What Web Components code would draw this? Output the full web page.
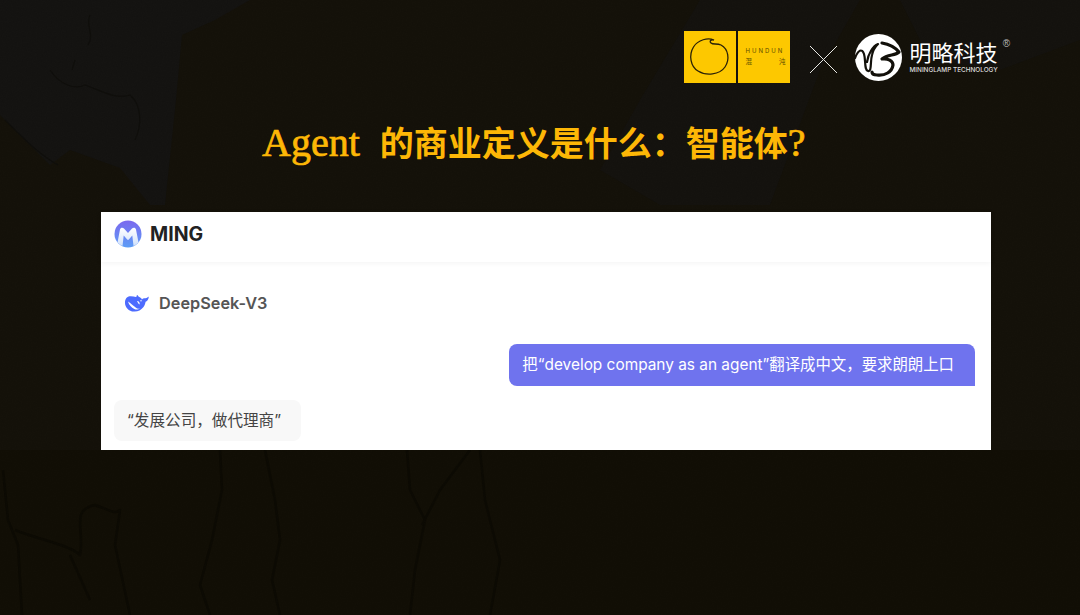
<!DOCTYPE html>
<html lang="zh">
<head>
<meta charset="utf-8">
<title>Agent 的商业定义是什么</title>
<style>
    html, body { margin: 0; height: 100%; background: #12100a; overflow: hidden; }
</style>
</head>
<body>
<slide-page>
    <brand-bar slot="top"></brand-bar>
    <slide-title slot="top"><span>Agent&nbsp; </span>的商业定义是什么&#xFF1A;智能体<span>?</span></slide-title>
    <chat-card>
        <model-label>DeepSeek-V3</model-label>
        <chat-bubble role="user">把“develop company as an agent”翻译成中文&#xFF0C;要求朗朗上口</chat-bubble>
        <chat-bubble role="reply">“发展公司&#xFF0C;做代理商”</chat-bubble>
    </chat-card>
</slide-page>

<script>
const SANS = `Inter, "Noto Sans CJK SC", sans-serif`;

class SlidePage extends HTMLElement {
    constructor() {
        super();
        this.attachShadow({mode: 'open'});
        this.shadowRoot.innerHTML = `
<style>
    :host{
        display: block;
        position: relative;
        width: 1080px;
        height: 615px;
        overflow: hidden;
        background: #12100a;
    }
    .backdrop{
        position: absolute;
        top: 0;
        left: 0;
    }
    .content{
        position: relative;
        display: flex;
        flex-direction: column;
        height: 100%;
        box-sizing: border-box;
        padding: 31px 70px 0 101px;
    }
    .card{
        display: block;
        margin-top: 46px;
    }
</style>
<svg class="backdrop" width="1080" height="615" viewBox="0 0 1080 615">
    <defs>
        <filter id="grain" x="0" y="0" width="100%" height="100%">
            <feTurbulence type="fractalNoise" baseFrequency="0.8" numOctaves="2" seed="4"/>
            <feColorMatrix values="0 0 0 0 0  0 0 0 0 0  0 0 0 0 0  0.8 0 0 0 -0.3"/>
        </filter>
    </defs>
    <rect width="1080" height="615" fill="#15120a"/>
    <rect y="450" width="1080" height="165" fill="#120f06"/>
    <path d="M0 0H250L215 20L182 35L176 100L165 205H150L120 168L70 150L50 165L0 115Z" fill="#151412"/>
    <path d="M600 170L640 100L700 0H860L820 70L770 205H660Z" fill="#15130f"/>
    <path d="M900 0H1080V40L1000 70L930 60Z" fill="#15130f"/>
    <g fill="none" stroke="#100f0c" stroke-width="1.200">
        <path d="M50 70C60 85 75 90 85 85C100 90 115 100 130 95C142 105 142 125 135 140"/>
        <path d="M75 60L72 70M90 15C85 25 95 35 88 45"/>
        <path d="M5 120C25 140 40 155 58 165"/>
    </g>
    <g fill="none" stroke="#0d0b04" stroke-width="2.500" stroke-linejoin="round">
        <path d="M3 470L8 520L18 545L22 615"/>
        <path d="M15 530C40 540 70 545 80 555C85 530 70 510 95 505C110 510 115 515 120 510L115 545L130 615"/>
        <path d="M70 555L90 600"/>
        <path d="M220 450L222 490L212 540L200 585L210 615"/>
        <path d="M265 450L275 500L280 540L272 580L280 615"/>
        <path d="M407 450L410 490L425 520L415 570L410 615"/>
        <path d="M470 450L440 490L422 525"/>
        <path d="M480 450L485 500L500 560L490 615"/>
    </g>
    <rect width="1080" height="615" filter="url(#grain)" opacity=".22"/>
</svg>
<div class="content">
    <slot name="top"></slot>
    <div class="card"><slot></slot></div>
</div>`;
    }
}

class BrandBar extends HTMLElement {
    constructor() {
        super();
        this.attachShadow({mode: 'open'});
        this.shadowRoot.innerHTML = `
<style>
    :host{
        display: flex;
        justify-content: flex-end;
        align-items: flex-start;
        height: 52px;
        color: #fff;
    }
    .tile{
        width: 52px;
        height: 52px;
        background: #fdc800;
    }
    .tile + .tile{
        margin-left: 2px;
    }
    .word{
        display: flex;
        flex-direction: column;
        height: 100%;
        box-sizing: border-box;
        padding: 16px 5px 0 7px;
        color: #5f4c00;
        font: 6px/8px ${SANS};
    }
    .word .en{
        letter-spacing: 2px;
        white-space: nowrap;
    }
    .word .zh{
        display: flex;
        justify-content: space-between;
        margin-top: 3px;
        font-size: 6.500px;
    }
    .times{
        margin: 14px 17px 0 19px;
    }
    .mark{
        margin-top: 3px;
        margin-right: 7px;
    }
    .name{
        display: flex;
        flex-direction: column;
        margin-top: 9px;
    }
    .name .zh{
        font: 400 22px/22px "Noto Sans CJK SC", sans-serif;
        white-space: nowrap;
    }
    .name .en{
        margin-top: 5px;
        font: 500 6.400px/6px ${SANS};
        white-space: nowrap;
        color: #ddd;
    }
    .reg{
        margin: 8px 0 0 5px;
        font: 10px/10px "Liberation Sans", sans-serif;
        color: #bbb;
    }
</style>
<div class="tile">
    <svg width="52" height="52" viewBox="0 0 52 52" fill="none" stroke="#2a2208" stroke-width="1.300" stroke-linecap="round">
        <path d="M27 12C25 10 27 8.500 30 9C24 6.500 14 8.500 9.500 16C4.500 24 6.500 35.500 14 40C22 45 35.500 44 41 36C46 28.500 44.500 18 37 14C33 12 29 14 27 12Z"/>
    </svg>
</div>
<div class="tile word">
    <span class="en">HUNDUN</span>
    <span class="zh"><span>混</span><span>沌</span></span>
</div>
<svg class="times" width="29" height="29" viewBox="0 0 29 29" stroke="#e8e8e4" stroke-width="1">
    <path d="M1 1L28 28M28 1L1 28"/>
</svg>
<svg class="mark" width="47" height="47" viewBox="0 0 47 47">
    <circle cx="23.500" cy="23.500" r="23.500" fill="#fff"/>
    <g fill="none" stroke="#12100a" stroke-linecap="round" stroke-linejoin="round">
        <path stroke-width="2.200" d="M0 24C3 16 7 14 9 20C11 26 9 36 13 37C17 38 15 28 17 21C18 16 21 12 23 10C18 12 13 20 12 28"/>
        <path stroke-width="3.200" d="M27 9C33 10 39 12 44 18C40 22 33 20 27 25C33 24 38 27 38 31C37 38 30 42 22 41C19 41 17 40 17 38"/>
    </g>
</svg>
<div class="name">
    <span class="zh">明略科技</span>
    <span class="en">MININGLAMP TECHNOLOGY</span>
</div>
<span class="reg">®</span>`;
    }
}

class SlideTitle extends HTMLElement {
    constructor() {
        super();
        this.attachShadow({mode: 'open'});
        this.shadowRoot.innerHTML = `
<style>
    :host{
        display: block;
        height: 48px;
        margin-top: 35px;
        margin-left: 161px;
        color: #fdb706;
        font: 700 34px/48px "Noto Sans CJK SC", sans-serif;
        white-space: nowrap;
    }
    ::slotted(span){
        font: 400 40px/48px "Liberation Serif", serif;
        -webkit-text-stroke: .7px #fdb706;
    }
</style>
<slot></slot>`;
    }
}

class ChatCard extends HTMLElement {
    constructor() {
        super();
        this.attachShadow({mode: 'open'});
        this.shadowRoot.innerHTML = `
<style>
    :host{
        display: block;
        width: 890px;
        height: 238px;
        background: #fff;
        font-family: ${SANS};
    }
    header{
        display: flex;
        align-items: center;
        gap: 8px;
        height: 44px;
        padding: 0 13px 6px;
        box-shadow: 0 1px 6px rgba(0,0,0,.05);
        color: #222;
        font: 700 19.500px/24px ${SANS};
    }
    header svg{
        display: block;
    }
    .log{
        display: flex;
        flex-direction: column;
        padding: 0 16px 0 13px;
    }
</style>
<header>
    <svg width="28" height="28" viewBox="0 0 28 28">
        <defs>
            <linearGradient id="ball" x1="0" y1="0" x2="0" y2="1">
                <stop offset="0" stop-color="#7b68ee"/>
                <stop offset="1" stop-color="#5c9df6"/>
            </linearGradient>
            <linearGradient id="em" x1="0" y1="0" x2="0" y2="1">
                <stop offset="0" stop-color="#fff"/>
                <stop offset="1" stop-color="#cfe0fb"/>
            </linearGradient>
        </defs>
        <circle cx="14" cy="14" r="13.500" fill="url(#ball)"/>
        <path d="M3.500 22.500L6 9.500C6.500 7.500 8.500 7 10 8.500L14 13L18 8.500C19.500 7 21.500 7.500 22 9.500L24.500 22.500C23.500 23.500 21.500 25 19.500 26L18.300 15.500L14.800 19.500C14.300 20 13.700 20 13.200 19.500L9.700 15.500L8.500 26C6.500 25 4.500 23.500 3.500 22.500Z" fill="url(#em)"/>
    </svg>
    <span>MING</span>
</header>
<div class="log"><slot></slot></div>`;
    }
}

class ModelLabel extends HTMLElement {
    constructor() {
        super();
        this.attachShadow({mode: 'open'});
        this.shadowRoot.innerHTML = `
<style>
    :host{
        display: flex;
        align-items: center;
        gap: 10px;
        height: 24px;
        margin: 29px 0 29px 11px;
        color: #555;
        font: 600 16.300px/24px ${SANS};
    }
    svg{
        display: block;
    }
</style>
<svg width="24" height="17" viewBox="0 0 24 17">
    <path fill="#4d6bfe" d="M23.800 1.800C23.200 1.500 22.900 2.200 22.400 2.600C21.600 3.300 20.700 3.500 19.700 3.300C18.600 3.200 17.700 3.600 16.900 4.400C16.500 3.200 15.500 2.500 14.300 2C13.700 1.700 13.300 1.400 12.900 .8C12.700 .4 12.600 .1 12.200 0C11.800 0 11.600 .6 11.800 1.300L10.900 1.900C9.100 1.600 6.800 1 4.600 1.300C1.800 1.700 0 4.200 0 7.900C0 12 3.700 16.300 9 16.600C12.900 16.800 15.900 15.300 18.300 12.300C20 10.200 20.200 8.300 20.600 6.700C22 6.400 23.500 4.900 23.800 1.800Z"/>
    <path fill="#fff" d="M3 6.500C6 8.500 8.500 10.800 11 12.800C12.300 13.800 13.800 13.900 15 13.300C13.500 14.800 11.300 15 9.300 14C6.500 12.500 4 10 3 6.500ZM12 6C13 5.800 14.300 6.800 14.600 8C14.800 8.800 14.600 9.300 14.200 9.500C13.400 8.600 12.600 7.300 12 6Z"/>
    <circle fill="#fff" cx="16" cy="5.800" r=".7"/>
</svg>
<slot></slot>`;
    }
}

class ChatBubble extends HTMLElement {
    constructor() {
        super();
        this.attachShadow({mode: 'open'});
        this.shadowRoot.innerHTML = `
<style>
    :host{
        display: block;
        align-self: flex-start;
        box-sizing: border-box;
        height: 41px;
        padding: 0 20px 0 13px;
        border-radius: 8px;
        background: #f8f8f8;
        color: #444;
        font: 15.600px/41px ${SANS};
        white-space: nowrap;
    }
    :host([role="user"]){
        align-self: flex-end;
        height: 42px;
        margin-bottom: 14px;
        padding: 0 21px 0 13px;
        border-radius: 8px 8px 0 8px;
        background: #6f73ee;
        color: #fff;
        font-size: 15.400px;
        line-height: 42px;
    }
</style>
<slot></slot>`;
    }
}

customElements.define('slide-page', SlidePage);
customElements.define('brand-bar', BrandBar);
customElements.define('slide-title', SlideTitle);
customElements.define('chat-card', ChatCard);
customElements.define('model-label', ModelLabel);
customElements.define('chat-bubble', ChatBubble);
</script>
</body>
</html>
